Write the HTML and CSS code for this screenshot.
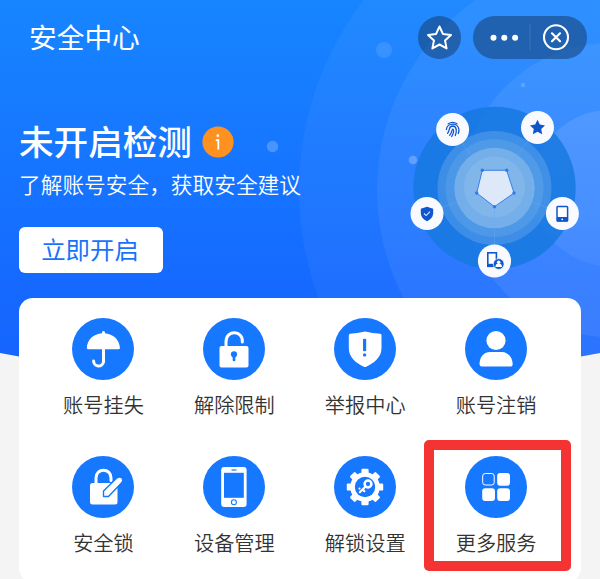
FILE: index.html
```html
<!DOCTYPE html>
<html lang="zh-CN">
<head>
<meta charset="utf-8">
<title>安全中心</title>
<link rel="stylesheet" href="styles.css">
</head>
<body>
<div class="screen">
  <svg class="backdrop" width="600" height="360" viewBox="0 0 600 360" aria-hidden="true">
    <defs>
      <linearGradient id="sky" x1="0" y1="0" x2="0" y2="1">
        <stop offset="0" stop-color="#1785ff"/><stop offset=".8" stop-color="#1569ff"/><stop offset="1" stop-color="#1565fe"/>
      </linearGradient>
      <linearGradient id="glow" x1="0" y1="0" x2="0" y2="1">
        <stop offset="0" stop-color="#fff" stop-opacity=".1"/><stop offset="1" stop-color="#fff" stop-opacity=".05"/>
      </linearGradient>
      <clipPath id="hero"><path d="M0 0H600V353Q300 410 0 353Z"/></clipPath>
    </defs>
    <g clip-path="url(#hero)">
      <rect width="600" height="360" fill="url(#sky)"/>
      <g fill="#fff">
        <circle cx="610" cy="190" r="311" fill-opacity=".045"/>
        <circle cx="610" cy="190" r="233" fill-opacity=".06"/>
        <circle cx="610" cy="190" r="147" fill-opacity=".07"/>
        <circle cx="610" cy="188" r="78" fill="url(#glow)"/>
        <circle cx="384" cy="50" r="8" fill-opacity=".11"/>
        <circle cx="272.500" cy="146.500" r="5.700" fill-opacity=".22"/>
        <circle cx="413" cy="160" r="4.300" fill-opacity=".25"/>
        <circle cx="523" cy="85" r="2.200" fill-opacity=".18"/>
      </g>
    </g>
  </svg>

  <header class="bar">
    <h1 class="bar-title">安全中心</h1>
    <div class="bar-actions">
      <span class="pill">
        <svg width="43" height="43" viewBox="0 0 43 43"><path d="M21.500 10.500L24.900 17.900L33 18.900L27 24.400L28.600 32.400L21.500 28.500L14.400 32.400L16 24.400L10 18.900L18.100 17.900Z" fill="none" stroke="#fff" stroke-width="2" stroke-linejoin="round"/></svg>
      </span>
      <span class="pill">
        <svg width="114" height="43" viewBox="0 0 114 43">
          <g fill="#fff"><circle cx="20.500" cy="21.800" r="3"/><circle cx="31.300" cy="21.800" r="3"/><circle cx="42.100" cy="21.800" r="3"/></g>
          <path d="M57 8.500V34" stroke="#fff" stroke-opacity=".12"/>
          <circle cx="83" cy="21.300" r="12" fill="none" stroke="#fff" stroke-width="2.100"/>
          <path d="M79 17.300L87 25.300M87 17.300L79 25.300" stroke="#fff" stroke-width="2.200" stroke-linecap="round"/>
        </svg>
      </span>
    </div>
  </header>

  <section class="hero">
    <div class="status">
      <div class="status-line">
        <h2 class="status-title">未开启检测</h2>
        <svg width="32" height="32" viewBox="0 0 32 32"><circle cx="16" cy="16" r="15.600" fill="#ff9120"/><circle cx="15.800" cy="9.700" r="1.400" fill="#fff"/><path d="M13.700 14.200H16.300V23.500" fill="none" stroke="#fff" stroke-width="1.800"/></svg>
      </div>
      <p class="status-text">了解账号安全，获取安全建议</p>
      <button class="start">立即开启</button>
    </div>
    <svg class="radar" width="170" height="174" viewBox="409 106 170 174">
      <circle cx="494.500" cy="188" r="81.200" fill="#1778e0" fill-opacity=".84"/>
      <g fill="#f5faf4">
        <circle cx="494.500" cy="188" r="57" fill-opacity=".16"/>
        <circle cx="494.500" cy="188" r="49" fill-opacity=".09"/>
        <circle cx="494.500" cy="188" r="40.200" fill-opacity=".23"/>
        <circle cx="494.500" cy="187" r="30.500" fill-opacity=".09"/>
      </g>
      <path d="M494.500 188L453 130M494.500 188L537 128M494.500 188L427 213M494.500 188L562 213M494.500 188V261" stroke="#6db0f5" stroke-opacity=".35"/>
      <path d="M482.300 170.300H506.700L514 193L494.500 206.700L476.700 193Z" fill="#dde9f8" stroke="#3a7fe8"/>
      <g fill="#3179e6"><circle cx="482.300" cy="170.300" r="1.700"/><circle cx="506.700" cy="170.300" r="1.700"/><circle cx="514" cy="193" r="1.700"/><circle cx="494.500" cy="206.700" r="1.700"/><circle cx="476.700" cy="193" r="1.700"/></g>
      <g fill="#f8faff"><circle cx="452.600" cy="129.600" r="16.500"/><circle cx="537.500" cy="127.500" r="16.500"/><circle cx="427" cy="213.600" r="16.500"/><circle cx="562.400" cy="213.600" r="16.500"/><circle cx="494.500" cy="261" r="16.600"/></g>
      <g fill="none" stroke="#1557cf" stroke-width="1.300" stroke-linecap="round">
        <path d="M448.200 123.800Q452.600 121 457 123.800"/>
        <path d="M446.400 129.500C446.800 122.500 458.400 122.300 458.900 129.500Q459 131.500 458.300 133.500"/>
        <path d="M447.600 133.300C450.400 130.500 448 126.300 452.600 126C457 126.300 457 131.500 455.300 135.600"/>
        <path d="M449.700 135.300C452.500 132 451.500 129.500 452.800 129C454.300 130 453.300 133.500 451.700 136.500"/>
      </g>
      <path d="M537.500 119.800L539.800 124.600L545 125.400L541.200 129.100L542.200 134.200L537.500 131.800L532.800 134.200L533.800 129.100L530 125.400L535.200 124.600Z" fill="#0f55ce"/>
      <path d="M427 206.700L433.200 208.800V213.500Q432.700 218.700 427 221.200Q421.300 218.700 420.800 213.500V208.800Z" fill="#0f55ce"/>
      <path d="M424 213.500L426.200 215.600L430 211.700" fill="none" stroke="#dce8ff" stroke-width="1.100"/>
      <rect x="557" y="206.500" width="10.600" height="14.600" rx=".8" fill="#fff" stroke="#0f55ce" stroke-width="1.500"/>
      <path d="M557 217H567.600V221.500H557Z" fill="#0f55ce"/><circle cx="562.200" cy="219.300" r=".9" fill="#fff"/>
      <rect x="487.800" y="252.800" width="8.600" height="13.500" fill="#fff" stroke="#0f55ce" stroke-width="1.600"/><path d="M487 263.800H497V267H487Z" fill="#0f55ce"/>
      <circle cx="498.700" cy="264" r="5.400" fill="#0f55ce" stroke="#f8faff" stroke-width=".7"/>
      <circle cx="498.700" cy="262.200" r="1.800" fill="#fff"/><path d="M495.400 266.900Q495.500 263.500 498.700 263.500Q501.900 263.500 502 266.900Z" fill="#fff"/>
    </svg>
  </section>

  <main class="card">
    <div class="service">
      <svg class="service-icon" viewBox="0 0 62 62"><circle cx="31" cy="31" r="31"/><path d="M14.800 30.500C15 10 47.500 10 48 30.500Q47.500 31.500 45.500 31.300H17Q15.200 31.500 14.800 30.500Z" fill="#fff"/><path d="M31.500 14.500V44A5 5 0 0 1 21.600 43" class="line" stroke-width="3"/></svg>
      <span>账号挂失</span>
    </div>
    <div class="service">
      <svg class="service-icon" viewBox="0 0 62 62"><circle cx="31" cy="31" r="31"/><rect x="16.500" y="28" width="29" height="21.500" rx="2" fill="#fff"/><path d="M23 29V23.500C23 11.500 40.400 12 39.300 24" class="line" stroke-width="3"/><circle cx="31" cy="36.300" r="3.100"/><path d="M31 37V42" stroke="#1677ff" stroke-width="2.700" stroke-linecap="round"/></svg>
      <span>解除限制</span>
    </div>
    <div class="service">
      <svg class="service-icon" viewBox="0 0 62 62"><circle cx="31" cy="31" r="31"/><path d="M31 13.500Q39 15.300 46.200 15.800Q47.500 16 47.500 17.200V30C47.500 39.500 40 45 32.200 48.700Q31 49.200 29.800 48.700C22 45 14.800 39.500 14.800 30V17.200Q14.800 16 16.100 15.800Q23 15.300 31 13.500Z" fill="#fff"/><rect x="29" y="20.800" width="3.200" height="12.500" rx="1"/><circle cx="30.600" cy="36.900" r="1.700"/></svg>
      <span>举报中心</span>
    </div>
    <div class="service">
      <svg class="service-icon" viewBox="0 0 62 62"><circle cx="31" cy="31" r="31"/><circle cx="31" cy="22.500" r="9.600" fill="#fff"/><path d="M14.500 46C14.800 38 19.500 34 25 34H37C43 34 47.500 39.500 47.700 46Q47.700 48.600 45 48.600H17Q14.400 48.600 14.500 46Z" fill="#fff"/></svg>
      <span>账号注销</span>
    </div>
    <div class="service">
      <svg class="service-icon" viewBox="0 0 62 62"><circle cx="31" cy="31" r="31"/><rect x="18" y="27" width="27.500" height="21.500" rx="2.500" fill="#fff"/><path d="M24 28V22C24 11.500 39 11.500 39 22V24.500" class="line" stroke-width="3"/><path d="M31.500 40.500V35L45 21.800Q48 20 50.200 22.300Q51.800 24.500 49.700 26.700L36.500 40.500Z" fill="#fff" stroke="#1677ff" stroke-width="1.400" stroke-linejoin="round"/></svg>
      <span>安全锁</span>
    </div>
    <div class="service">
      <svg class="service-icon" viewBox="0 0 62 62"><circle cx="31" cy="31" r="31"/><rect x="18.200" y="11" width="25.400" height="40" rx="3" fill="#fff"/><rect x="21" y="16.800" width="19.800" height="25"/><path d="M28.500 14H33.500" stroke="#1677ff" stroke-width="1.200"/><circle cx="30.900" cy="46.200" r="2.500" fill="none" stroke="#1677ff" stroke-width="1.100"/></svg>
      <span>设备管理</span>
    </div>
    <div class="service">
      <svg class="service-icon" viewBox="0 0 62 62"><circle cx="31" cy="31" r="31"/>
        <g fill="#fff"><circle cx="31" cy="31" r="14.800"/><g id="teeth"><rect x="27.400" y="12.800" width="7.200" height="36.400" rx="1.200"/><rect x="12.800" y="27.400" width="36.400" height="7.200" rx="1.200"/></g><use href="#teeth" transform="rotate(45 31 31)"/></g>
        <circle cx="31" cy="31" r="10.200"/><circle cx="34" cy="28" r="3.400" fill="none" stroke="#fff" stroke-width="2.500"/><path d="M31.600 30.400L25.800 36.200M28.600 33.400L30.400 35.200" class="line" stroke-width="2.100"/><circle cx="25.500" cy="32.600" r="1.100" fill="#fff"/></svg>
      <span>解锁设置</span>
    </div>
    <div class="service service-marked">
      <svg class="service-icon" viewBox="0 0 62 62"><circle cx="31" cy="31" r="31"/><rect x="17.700" y="17.500" width="11.500" height="11.500" rx="2.500" fill="none" stroke="#fff"/><g fill="#fff"><rect x="32.200" y="17" width="12.800" height="12.800" rx="3"/><rect x="17.200" y="32.200" width="12.800" height="12.800" rx="3"/><rect x="32.200" y="32.200" width="12.800" height="12.800" rx="3"/></g></svg>
      <span>更多服务</span>
    </div>
  </main>
</div>
</body>
</html>
```
FILE: styles.css
```css
*,
*::after { box-sizing: border-box; }

body {
  margin: 0;
  background: #f4f4f5;
  font-family: "Noto Sans CJK SC", sans-serif;
}

h1, h2, p { margin: 0; }

svg { display: block; }

.screen {
  position: relative;
  height: 579px;
  overflow: hidden;
}

.backdrop {
  position: absolute;
  top: 0;
  left: 0;
}

.bar {
  position: relative;
  display: flex;
  align-items: center;
  justify-content: space-between;
  height: 75px;
  padding: 0 13.5px 0 29px;
}

.bar-title {
  padding-bottom: 4px;
  color: #fff;
  font-size: 27.700px;
  font-weight: 400;
  line-height: 40px;
}

.bar-actions {
  display: flex;
  gap: 12px;
}

.pill {
  overflow: hidden;
  border-radius: 22px;
  background: rgba(24, 68, 124, .6);
}

.hero {
  position: relative;
  display: flex;
  justify-content: space-between;
  height: 223px;
  padding: 31px 21px 0 19px;
}

.status {
  display: flex;
  flex-direction: column;
  align-items: flex-start;
  padding-top: 12px;
}

.status-line {
  display: flex;
  align-items: center;
  gap: 10px;
  height: 48px;
}

.status-title {
  padding-bottom: 5px;
  color: #fff;
  font-size: 34.600px;
  font-weight: 500;
  line-height: 48px;
}

.status-text {
  margin-top: 2px;
  color: #fff;
  font-size: 21.700px;
  font-weight: 350;
  line-height: 32px;
  white-space: nowrap;
}

.start {
  width: 144px;
  height: 46px;
  margin-top: 27px;
  padding: 0 2px 2px 0;
  border: 0;
  border-radius: 6px;
  background: #fff;
  color: #1973fa;
  font: 400 24.400px/44px "Noto Sans CJK SC", sans-serif;
}

.card {
  position: relative;
  display: grid;
  grid-template-columns: repeat(4, 130.9px);
  grid-auto-rows: 138px;
  width: 561.5px;
  height: 284px;
  margin-left: 19px;
  padding: 20px 0 0 19px;
  border-radius: 14px;
  background: #fff;
}

.service {
  position: relative;
  display: flex;
  flex-direction: column;
  align-items: center;
  gap: 10px;
  color: #333;
  font-size: 20.200px;
  font-weight: 350;
  line-height: 30px;
}

.service-icon {
  width: 62px;
  height: 62px;
  fill: #1677ff;
}

.line {
  fill: none;
  stroke: #fff;
  stroke-linecap: round;
}

.service-marked::after {
  content: "";
  position: absolute;
  top: -16px;
  left: -7px;
  width: 147px;
  height: 131px;
  border: 10px solid #f53333;
  border-radius: 5px;
}
```
